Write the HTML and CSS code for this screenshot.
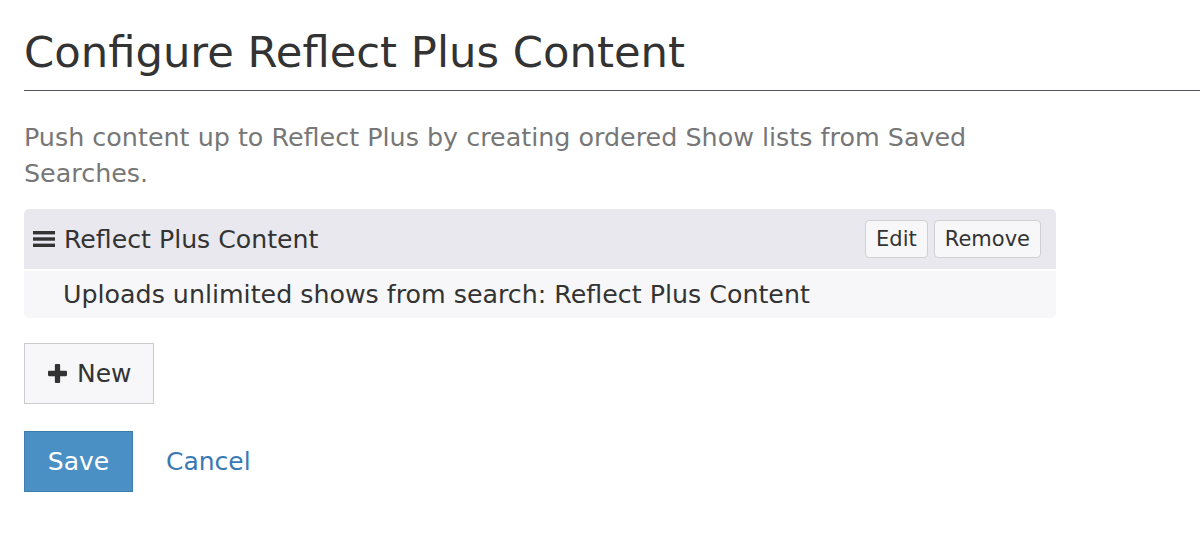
FILE: index.html
```html
<!DOCTYPE html>
<html>
<head>
<meta charset="utf-8">
<link rel="stylesheet" href="styles.css">
</head>
<body>
<div class="page">
  <h1 class="title">Configure Reflect Plus Content</h1>
  <hr class="rule">
  <p class="intro">Push content up to Reflect Plus by creating ordered Show lists from Saved Searches.</p>
  <div class="list">
    <div class="item-head">
      <div class="item-name">
        <svg class="bars" width="22" height="16" viewBox="0 0 22 16"><rect x="0" y="0" width="22" height="3.4" fill="#333"/><rect x="0" y="6.3" width="22" height="3.4" fill="#333"/><rect x="0" y="12.6" width="22" height="3.4" fill="#333"/></svg>
        <span>Reflect Plus Content</span>
      </div>
      <div class="item-actions">
        <button class="btn-sm">Edit</button>
        <button class="btn-sm">Remove</button>
      </div>
    </div>
    <div class="item-body">Uploads unlimited shows from search: Reflect Plus Content</div>
  </div>
  <button class="btn-new"><svg class="plus" width="19" height="19" viewBox="0 0 18 18"><rect x="6.5" y="0" width="5" height="18" rx="1" fill="#333"/><rect x="0" y="6.5" width="18" height="5" rx="1" fill="#333"/></svg>New</button>
  <div class="form-actions">
    <button class="btn-save">Save</button>
    <a class="cancel" href="#">Cancel</a>
  </div>
</div>
</body>
</html>
```
FILE: styles.css
```css
html, body { margin: 0; padding: 0; background: #fff; }
body { font-family: "DejaVu Sans", Verdana, sans-serif; color: #333; }
.page { padding: 0 0 0 24px; }
.title { font-size: 43.3px; font-weight: normal; margin: 0; padding-top: 26px; line-height: 52px; color: #333; }
.rule { border: 0; border-top: 1px solid #555566; margin: 12px 0 0 0; height: 0; }
.intro { font-size: 25.4px; line-height: 36px; color: #777; margin: 28px 0 0 0; width: 1000px; }
.list { width: 1032px; margin-top: 18px; }
.item-head { background: #e8e8ee; border-radius: 5px 5px 0 0; height: 60px; display: flex; align-items: center; justify-content: space-between; padding: 0 15px 0 9px; box-sizing: border-box; }
.item-name { display: flex; align-items: center; gap: 9px; font-size: 25.2px; color: #333; }
.bars { display: block; }
.item-actions { display: flex; gap: 6px; }
.btn-sm { font-family: inherit; font-size: 21px; color: #333; background: #f7f7f9; border: 1px solid #cfcfd4; border-radius: 4px; height: 38px; padding: 0 10px; }
.item-body { background: #f7f7f9; border-radius: 0 0 5px 5px; margin-top: 2px; height: 47px; display: flex; align-items: center; padding-left: 39px; font-size: 25.3px; color: #333; }
.btn-new { margin-top: 25px; display: flex; align-items: center; gap: 10px; font-family: inherit; font-size: 25px; color: #333; background: #f7f7f9; border: 1px solid #ccc; height: 61px; width: 130px; padding: 0 0 0 23px; box-sizing: border-box; }
.form-actions { display: flex; align-items: center; margin-top: 27px; gap: 33px; }
.btn-save { font-family: inherit; font-size: 25px; color: #fff; background: #4a90c5; border: 1px solid #3d7db0; height: 61px; width: 109px; padding: 0; }
.cancel { font-size: 25px; color: #3a78b4; text-decoration: none; }
```
